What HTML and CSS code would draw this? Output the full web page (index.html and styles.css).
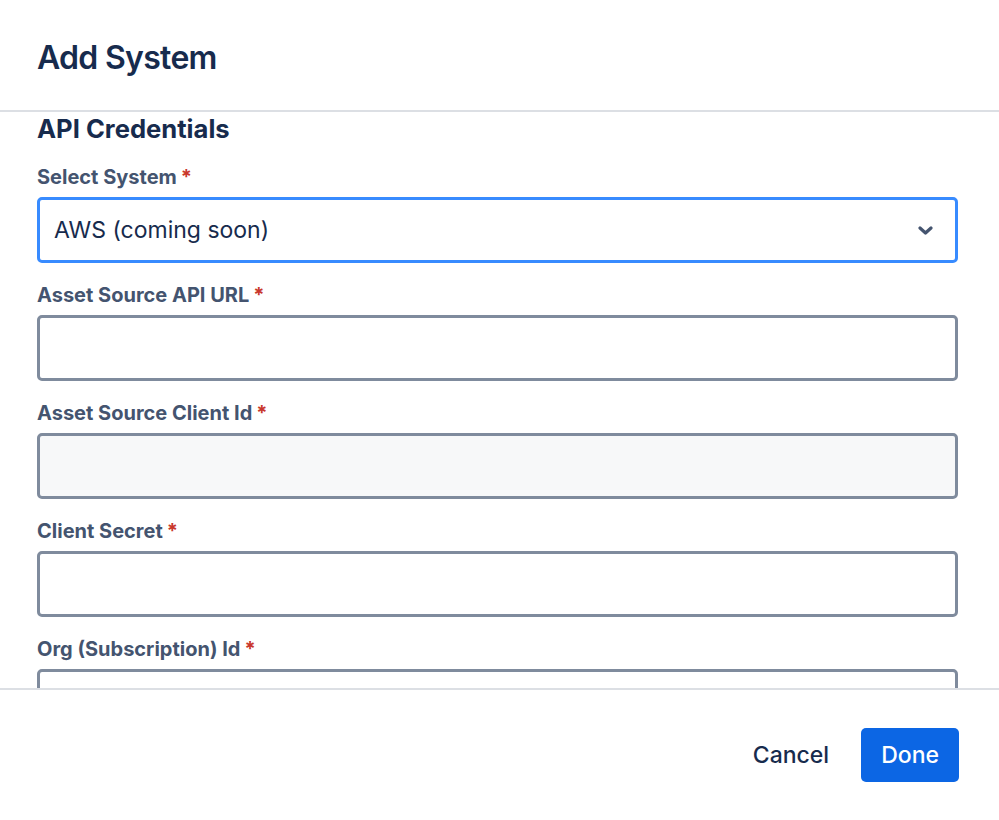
FILE: index.html
```html
<!DOCTYPE html>
<html lang="en">
<head>
<meta charset="utf-8">
<title>Add System</title>
<link rel="stylesheet" href="styles.css">
</head>
<body>
<div class="modal">
  <header class="modal-header">
    <h1 class="modal-title">Add System</h1>
  </header>
  <div class="modal-body">
    <h2 class="section-title">API Credentials</h2>
    <div class="field">
      <label class="label">Select System<span class="req">*</span></label>
      <div class="select">
        <span class="select-value">AWS (coming soon)</span>
        <svg class="chevron" width="15" height="9" viewBox="0 0 15 9" aria-hidden="true"><path d="M2 2 L7.5 7 L13 2" fill="none" stroke="#44546f" stroke-width="3.2" stroke-linecap="round" stroke-linejoin="round"/></svg>
      </div>
    </div>
    <div class="field">
      <label class="label">Asset Source API URL<span class="req">*</span></label>
      <div class="input"></div>
    </div>
    <div class="field">
      <label class="label">Asset Source Client Id<span class="req">*</span></label>
      <div class="input input-disabled"></div>
    </div>
    <div class="field">
      <label class="label">Client Secret<span class="req">*</span></label>
      <div class="input"></div>
    </div>
    <div class="field">
      <label class="label">Org (Subscription) Id<span class="req">*</span></label>
      <div class="input"></div>
    </div>
  </div>
  <footer class="modal-footer">
    <button class="btn btn-subtle">Cancel</button>
    <button class="btn btn-primary">Done</button>
  </footer>
</div>
</body>
</html>
```

FILE: styles.css
```css
* { box-sizing: border-box; }
html, body { margin: 0; padding: 0; background: #ffffff; }
body {
  font-family: Inter, "Noto Sans", "Liberation Sans", sans-serif;
  color: #172b4d;
}
.modal {
  width: 999px;
  height: 820px;
  display: flex;
  flex-direction: column;
  background: #fff;
}
.modal-header {
  height: 112px;
  flex: none;
  display: flex;
  align-items: center;
  padding: 5px 37px 0;
  border-bottom: 2px solid #dcdfe4;
}
.modal-title {
  margin: 0;
  font-size: 32px;
  font-weight: 600;
  line-height: 38px;
  color: #172b4d;
  letter-spacing: -0.7px;
}
.modal-body {
  flex: 1;
  overflow: hidden;
  padding: 2px 41px 0 37px;
}
.section-title {
  margin: 0 0 20px;
  font-size: 25.6px;
  line-height: 30px;
  font-weight: 700;
  color: #172b4d;
}
.field { margin-bottom: 19px; }
.label {
  display: block;
  font-size: 20px;
  line-height: 26px;
  font-weight: 700;
  color: #44546f;
  margin-bottom: 7px;
}
.req {
  color: #c9372c;
  margin-left: 4px;
}
.select, .input {
  height: 66px;
  border: 3px solid #7f8b9d;
  border-radius: 5px;
  background: #fff;
}
.select {
  border-color: #388bff;
  display: flex;
  align-items: center;
  justify-content: space-between;
  padding: 0 22px 0 14px;
}
.select-value {
  font-size: 23px;
  color: #172b4d;
}
.chevron { display: block; }
.input-disabled { background: #f7f8f9; }
.modal-footer {
  height: 132px;
  flex: none;
  border-top: 2px solid #dcdfe4;
  display: flex;
  align-items: center;
  justify-content: flex-end;
  gap: 12px;
  padding: 0 40px;
}
.btn {
  font-family: inherit;
  font-size: 23px;
  font-weight: 500;
  height: 54px;
  padding: 0 20px;
  border: none;
  border-radius: 5px;
  cursor: pointer;
}
.btn-subtle { background: transparent; color: #172b4d; }
.btn-primary { background: #0c66e4; color: #fff; }
```
